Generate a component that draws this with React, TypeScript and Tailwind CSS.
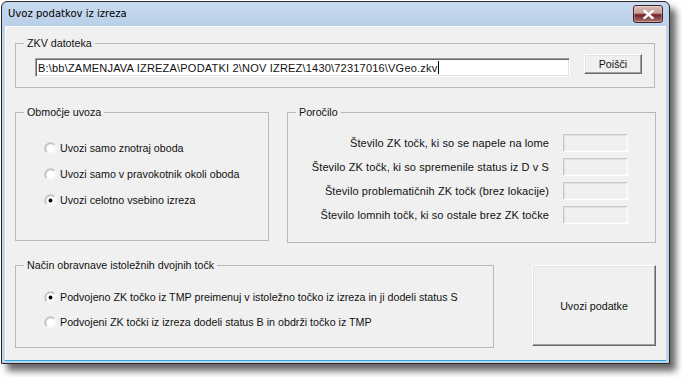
import React from "react";

const font = { fontFamily: '"Liberation Sans", Arial, sans-serif' };

function Radio({ checked }: { checked?: boolean }) {
  return (
    <svg width="13" height="13" viewBox="0 0 13 13" className="shrink-0">
      <circle cx="6.5" cy="6.5" r="5" fill="#ffffff" />
      <path d="M2.61 10.39 A5.5 5.5 0 0 1 10.39 2.61" fill="none" stroke="#a0a0a0" strokeWidth="1" />
      <path d="M10.39 2.61 A5.5 5.5 0 0 1 2.61 10.39" fill="none" stroke="#ffffff" strokeWidth="1" />
      <path d="M3.32 9.68 A4.5 4.5 0 0 1 9.68 3.32" fill="none" stroke="#d0d0d0" strokeWidth="1" />
      <path d="M9.68 3.32 A4.5 4.5 0 0 1 3.32 9.68" fill="none" stroke="#f4f4f4" strokeWidth="1" />
      {checked && <circle cx="6.5" cy="6.5" r="1.9" fill="#000000" />}
    </svg>
  );
}

function RadioRow({ label, checked }: { label: string; checked?: boolean }) {
  return (
    <div className="flex h-[14px] items-center gap-[3px]">
      <Radio checked={checked} />
      <span className="whitespace-nowrap">{label}</span>
    </div>
  );
}

function Legend({ children }: { children: React.ReactNode }) {
  return <legend className="ml-[8px] px-[3px] text-[10.7px] leading-[14px]">{children}</legend>;
}

const raised =
  "bg-[#f0f0f0] border border-t-white border-l-white border-b-[#696969] border-r-[#696969] shadow-[inset_-1px_-1px_0_#a0a0a0,inset_1px_1px_0_#e3e3e3]";

function ReportRow({ label }: { label: string }) {
  return (
    <div className="flex h-[18px] items-center justify-end gap-[14px]">
      <span className="whitespace-nowrap text-[11px] tracking-[0.1px]">{label}</span>
      <div className="h-[18px] w-[65px] border border-t-[#c8c8c8] border-l-[#c8c8c8] border-b-white border-r-white bg-[#f0f0f0] shadow-[inset_1px_1px_0_#e0e0e0,inset_-1px_-1px_0_#f6f6f6]" />
    </div>
  );
}

export default function App() {
  return (
    <div className="relative h-[377px] w-[682px] overflow-hidden bg-white text-[10.7px] leading-[14px] text-[#111111]" style={font}>
      <div className="ml-[1px] mt-[1px] flex h-[363px] w-[669px] flex-col rounded-t-[6px] border border-[#2a2a2a] bg-[#bcd3ec] px-[3px] pb-[2px] shadow-[6px_7px_7px_rgba(0,0,0,0.6)]">
        {/* title bar */}
        <div className="flex h-[24px] shrink-0 items-center justify-between rounded-t-[5px] bg-[linear-gradient(#c9dbef,#b9cfe9)] pl-[3px] pr-[3px]">
          <span
            className="text-[11.2px] leading-[14px] text-black"
            style={{ fontFamily: '"Liberation Sans Narrow", "DejaVu Sans Condensed", "Liberation Sans", sans-serif' }}
          >
            Uvoz podatkov iz izreza
          </span>
          <div className="flex h-[18px] w-[30px] items-center justify-center rounded-[3px] border border-[#3e2020] bg-[linear-gradient(#d9bdb9_0%,#c29c98_45%,#8a3434_52%,#772828_60%,#a87a76_100%)] shadow-[inset_0_0_0_1px_rgba(255,255,255,0.3)]">
            <svg width="11" height="9" viewBox="0 0 11 9">
              <path d="M1.5 1 L9.5 8 M9.5 1 L1.5 8" stroke="#ffffff" strokeWidth="2.4" strokeLinecap="square" />
            </svg>
          </div>
        </div>

        {/* client area */}
        <div className="flex-1 border-b border-[#30a8e0] bg-[#f0f0f0] pl-[10px] pt-[10px] shadow-[inset_1px_1px_0_#ffffff]">
          {/* ZKV datoteka */}
          <fieldset className="h-[52px] w-[640px] border border-[#b8b8b8]">
            <Legend>ZKV datoteka</Legend>
            <div className="flex items-start gap-[14px] pl-[19px]">
              <div className="mt-[8px] flex h-[19px] w-[535px] items-center border border-t-[#a0a0a0] border-l-[#a0a0a0] border-b-white border-r-white bg-white pl-[2px] shadow-[inset_1px_1px_0_#696969,inset_-1px_-1px_0_#e3e3e3]">
                <span className="whitespace-nowrap text-[11px] tracking-[0.2px]">{"B:\\bb\\ZAMENJAVA IZREZA\\PODATKI 2\\NOV IZREZ\\1430\\72317016\\VGeo.zkv"}</span>
                <span className="ml-[1px] h-[13px] w-[1px] bg-black" />
              </div>
              <button className={`mt-[4px] flex h-[20px] w-[58px] items-center justify-center ${raised}`}>Poišči</button>
            </div>
          </fieldset>

          {/* row 2 */}
          <div className="mt-[17px] flex items-start">
            <fieldset className="h-[136px] w-[254px] border border-[#b8b8b8]">
              <Legend>Območje uvoza</Legend>
              <div className="flex flex-col gap-[12px] pl-[28px] pt-[22px]">
                <RadioRow label="Uvozi samo znotraj oboda" />
                <RadioRow label="Uvozi samo v pravokotnik okoli oboda" />
                <RadioRow label="Uvozi celotno vsebino izreza" checked />
              </div>
            </fieldset>
            <fieldset className="ml-[18px] h-[138px] w-[369px] border border-[#b8b8b8]">
              <Legend>Poročilo</Legend>
              <div className="flex flex-col gap-[6px] pr-[27px] pt-[15px]">
                <ReportRow label="Število ZK točk, ki so se napele na lome" />
                <ReportRow label="Število ZK točk, ki so spremenile status iz D v S" />
                <ReportRow label="Število problematičnih ZK točk (brez lokacije)" />
                <ReportRow label="Število lomnih točk, ki so ostale brez ZK točke" />
              </div>
            </fieldset>
          </div>

          {/* row 3 */}
          <div className="mt-[15px] flex items-start">
            <fieldset className="h-[90px] w-[479px] border border-[#b8b8b8]">
              <Legend>Način obravnave istoležnih dvojnih točk</Legend>
              <div className="flex flex-col gap-[11px] pl-[28px] pt-[18px]">
                <RadioRow label="Podvojeno ZK točko iz TMP preimenuj v istoležno točko iz izreza in ji dodeli status S" checked />
                <RadioRow label="Podvojeni ZK točki iz izreza dodeli status B in obdrži točko iz TMP" />
              </div>
            </fieldset>
            <button className={`ml-[38px] mt-[7px] flex h-[81px] w-[124px] items-center justify-center ${raised}`}>
              Uvozi podatke
            </button>
          </div>
        </div>
      </div>
    </div>
  );
}
